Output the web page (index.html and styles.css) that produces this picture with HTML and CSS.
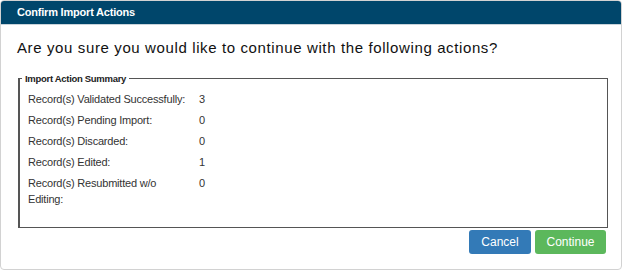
FILE: index.html
```html
<!DOCTYPE html>
<html>
<head>
<meta charset="utf-8">
<link rel="stylesheet" href="styles.css">
</head>
<body>
<div class="modal">
  <div class="modal-header">Confirm Import Actions</div>
  <div class="modal-body">
    <p class="question">Are you sure you would like to continue with the following actions?</p>
    <fieldset class="summary">
      <legend>Import Action Summary</legend>
      <div class="rows">
        <div class="label">Record(s) Validated Successfully:</div><div class="value">3</div>
        <div class="label">Record(s) Pending Import:</div><div class="value">0</div>
        <div class="label">Record(s) Discarded:</div><div class="value">0</div>
        <div class="label">Record(s) Edited:</div><div class="value">1</div>
        <div class="label">Record(s) Resubmitted w/o Editing:</div><div class="value">0</div>
      </div>
    </fieldset>
    <div class="actions">
      <button class="btn btn-cancel">Cancel</button>
      <button class="btn btn-continue">Continue</button>
    </div>
  </div>
</div>
</body>
</html>
```
FILE: styles.css
```css
html, body {
  margin: 0;
  padding: 0;
  background: #ffffff;
  font-family: "Liberation Sans", Arial, sans-serif;
}
.modal {
  width: 620px;
  height: 268px;
  border: 1px solid #d2d2d2;
  border-radius: 4px;
  overflow: hidden;
  background: #fff;
}
.modal-header {
  background: #00466b;
  color: #fff;
  font-weight: bold;
  font-size: 11px;
  letter-spacing: -0.2px;
  height: 23px;
  line-height: 22px;
  padding-left: 16px;
  border-bottom: 1px solid #c9d3da;
}
.modal-body {
  padding: 0 15px 0 16px;
}
.question {
  margin: 14px 0 0 0;
  font-size: 15px;
  letter-spacing: 0.62px;
  line-height: 18px;
  color: #111;
}
.summary {
  margin: 16px 0 0 1px;
  padding: 7px 10px 20px 8px;
  border: 1px solid #555;
  border-left-width: 2px;
  box-sizing: border-box;
  width: 590px;
  height: 155px;
}
.summary legend {
  font-size: 9.5px;
  letter-spacing: -0.3px;
  font-weight: bold;
  color: #222;
  padding: 0 3px;
  margin-left: -6px;
}
.rows {
  display: grid;
  grid-template-columns: 160px auto;
  column-gap: 11px;
  row-gap: 5px;
  font-size: 11px;
  letter-spacing: -0.2px;
  line-height: 16px;
  color: #333;
}
.actions {
  display: flex;
  justify-content: flex-end;
  gap: 4px;
  margin-top: 2px;
}
.btn {
  height: 24px;
  border: none;
  border-radius: 3px;
  color: #fff;
  font-family: "Liberation Sans", Arial, sans-serif;
  font-size: 12px;
  padding: 0;
}
.btn-cancel {
  background: #337ab7;
  width: 62px;
}
.btn-continue {
  background: #5cb85c;
  width: 71px;
}
```
